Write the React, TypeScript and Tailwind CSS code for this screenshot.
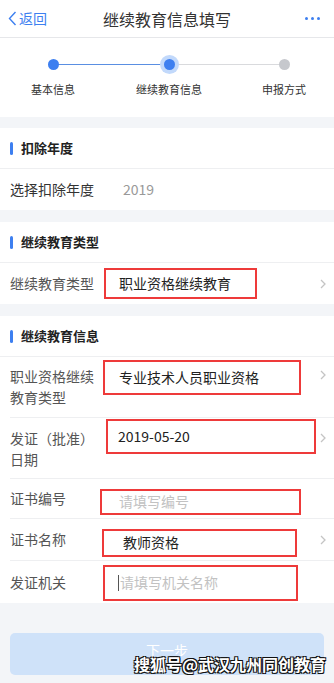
import React from "react";

const font = { fontFamily: '"Noto Sans CJK SC", "Noto Sans", sans-serif' };

function Chevron() {
  return (
    <svg width="6" height="10" viewBox="0 0 6 10" className="absolute right-[8px]">
      <path d="M1 1 L5 5 L1 9" fill="none" stroke="#c4c4c4" strokeWidth="1.3" />
    </svg>
  );
}

function SectionTitle({ title }: { title: string }) {
  return (
    <div className="flex items-center h-[41px] border-b border-[#eeeff1]">
      <div className="ml-[10px] w-[3px] h-[13px] rounded-full bg-[#3d7ff0]" />
      <span className="ml-[8px] text-[13px] font-bold text-[#222]">{title}</span>
    </div>
  );
}

export default function App() {
  return (
    <div className="w-[334px] h-[683px] bg-[#f3f5f8] relative overflow-hidden" style={font}>
      {/* top bar */}
      <div className="h-[38px] bg-white border-b border-[#e6e7ea] flex items-center relative">
        <div className="flex items-center ml-[8px] text-[#3d7ff0]">
          <svg width="9" height="15" viewBox="0 0 9 15">
            <path d="M7.5 1 L1.5 7.5 L7.5 14" fill="none" stroke="#3d7ff0" strokeWidth="1.4" />
          </svg>
          <span className="ml-[2px] text-[14px]">返回</span>
        </div>
        <div className="absolute left-0 right-0 text-center text-[16px] text-[#333] pointer-events-none">
          继续教育信息填写
        </div>
        <div className="ml-auto mr-[14px] flex gap-[3px]">
          <div className="w-[3px] h-[3px] rounded-full bg-[#3d7ff0]" />
          <div className="w-[3px] h-[3px] rounded-full bg-[#3d7ff0]" />
          <div className="w-[3px] h-[3px] rounded-full bg-[#3d7ff0]" />
        </div>
      </div>

      {/* stepper */}
      <div className="h-[79px] bg-white relative">
        <div className="absolute left-[53px] top-[26px] w-[116px] h-[1px] bg-[#5a8fe2]" />
        <div className="absolute left-[169px] top-[26px] w-[115px] h-[1px] bg-[#d9dadd]" />
        <div className="absolute left-[48px] top-[21px] w-[11px] h-[11px] rounded-full bg-[#3d7ff0]" />
        <div className="absolute left-[160px] top-[17px] w-[19px] h-[19px] rounded-full bg-[#c2d9fb] flex items-center justify-center">
          <div className="w-[11px] h-[11px] rounded-full bg-[#3d7ff0]" />
        </div>
        <div className="absolute left-[279px] top-[21px] w-[11px] h-[11px] rounded-full bg-[#c6c8cd]" />
        <div className="absolute top-[43px] left-0 right-0 text-[11px] text-[#333]">
          <span className="absolute left-[30px] w-[46px] text-center">基本信息</span>
          <span className="absolute left-[134px] w-[70px] text-center">继续教育信息</span>
          <span className="absolute left-[261px] w-[46px] text-center">申报方式</span>
        </div>
      </div>

      <div className="h-[11px]" />

      {/* section 1 */}
      <div className="bg-white">
        <SectionTitle title="扣除年度" />
        <div className="h-[41px] flex items-center text-[14px]">
          <span className="ml-[10px] text-[#333]">选择扣除年度</span>
          <span className="ml-[29px] text-[#999]">2019</span>
        </div>
      </div>

      <div className="h-[12px]" />

      {/* section 2 */}
      <div className="bg-white">
        <SectionTitle title="继续教育类型" />
        <div className="h-[41px] flex items-center text-[14px] relative">
          <span className="ml-[10px] w-[94px] text-[#555]">继续教育类型</span>
          <div className="w-[153px] h-[31px] border-2 border-[#ee3a3a] flex items-center pl-[13px] text-[#222]">
            职业资格继续教育
          </div>
          <Chevron />
        </div>
      </div>

      <div className="h-[12px]" />

      {/* section 3 */}
      <div className="bg-white">
        <SectionTitle title="继续教育信息" />

        <div className="h-[61px] flex items-start text-[14px] relative border-b border-[#eeeff1] ml-[10px]">
          <span className="w-[93px] mt-[9px] leading-[21px] text-[#555]">
            职业资格继续
            <br />
            教育类型
          </span>
          <div className="mt-[3px] w-[198px] h-[35px] border-2 border-[#ee3a3a] flex items-center pl-[14px] text-[#222]">
            专业技术人员职业资格
          </div>
          <svg width="6" height="10" viewBox="0 0 6 10" className="absolute right-[8px] top-[13px]">
            <path d="M1 1 L5 5 L1 9" fill="none" stroke="#c4c4c4" strokeWidth="1.3" />
          </svg>
        </div>

        <div className="h-[61px] flex items-start text-[14px] relative border-b border-[#eeeff1] ml-[10px]">
          <span className="w-[96px] mt-[10px] leading-[21px] text-[#555]">
            发证（批准）
            <br />
            日期
          </span>
          <div className="mt-[1px] w-[210px] h-[35px] border-2 border-[#ee3a3a] flex items-center pl-[10px] text-[#222]">
            2019-05-20
          </div>
          <svg width="6" height="10" viewBox="0 0 6 10" className="absolute right-[8px] top-[15px]">
            <path d="M1 1 L5 5 L1 9" fill="none" stroke="#c4c4c4" strokeWidth="1.3" />
          </svg>
        </div>

        <div className="h-[40px] flex items-center text-[14px] relative border-b border-[#eeeff1] ml-[10px]">
          <span className="w-[90px] text-[#555]">证书编号</span>
          <div className="mt-[6px] w-[201px] h-[26px] border-2 border-[#ee3a3a] flex items-center pl-[17px] text-[#c2c2c2]">
            请填写编号
          </div>
        </div>

        <div className="h-[42px] flex items-center text-[14px] relative border-b border-[#eeeff1] ml-[10px]">
          <span className="w-[92px] text-[#555]">证书名称</span>
          <div className="mt-[6px] w-[195px] h-[28px] border-2 border-[#ee3a3a] flex items-center pl-[19px] text-[#222]">
            教师资格
          </div>
          <Chevron />
        </div>

        <div className="h-[42px] flex items-center text-[14px] relative ml-[10px]">
          <span className="w-[93px] text-[#555]">发证机关</span>
          <div className="mt-[1px] w-[195px] h-[36px] border-2 border-[#ee3a3a] flex items-center pl-[13px] text-[#c2c2c2]">
            <span className="w-[1px] h-[16px] bg-[#555] mr-[1px]" />
            请填写机关名称
          </div>
        </div>
      </div>

      {/* button */}
      <div className="mt-[30px] mx-[10px] h-[42px] rounded-[5px] bg-[#cfe2f9] flex items-center justify-center">
        <span className="text-[14px] text-white -mt-[8px]">下一步</span>
      </div>

      {/* watermark */}
      <div
        className="absolute left-[134px] top-[653px] text-[16px] leading-[22px] font-bold text-white whitespace-nowrap"
        style={{ textShadow: "1px 1px 0 #111, -1px -1px 0 #111, 1px -1px 0 #111, -1px 1px 0 #111" }}
      >
        搜狐号@武汉九州同创教育
      </div>
    </div>
  );
}
